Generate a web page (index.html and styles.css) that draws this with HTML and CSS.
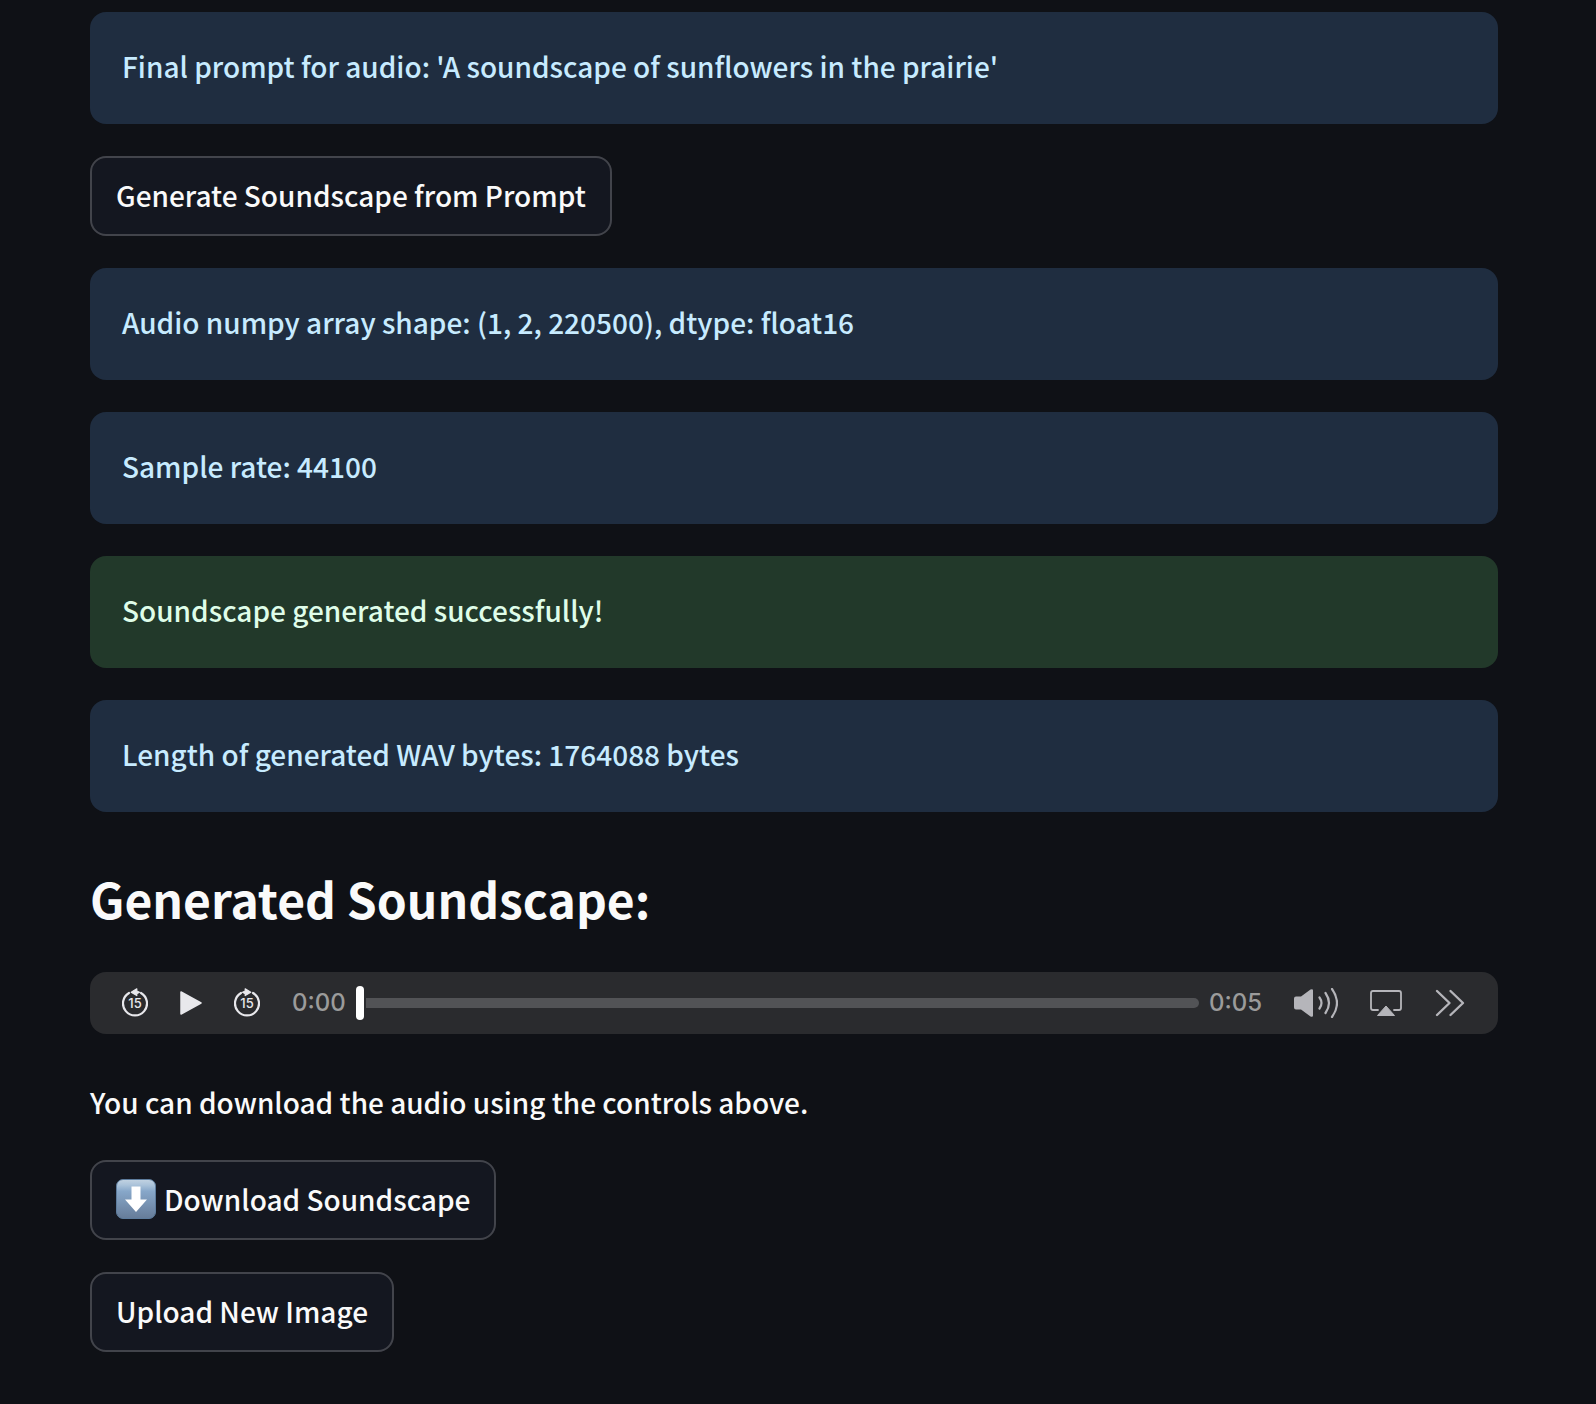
FILE: index.html
```html
<!DOCTYPE html>
<html lang="en">
<head>
<meta charset="utf-8">
<meta name="viewport" content="width=device-width, initial-scale=1">
<title>Soundscape Generator</title>
<link rel="stylesheet" href="styles.css">
</head>
<body>
<main class="page">
  <div class="alert alert-info">Final prompt for audio: 'A soundscape of sunflowers in the prairie'</div>
  <button class="button" type="button">Generate Soundscape from Prompt</button>
  <div class="alert alert-info">Audio numpy array shape: (1, 2, 220500), dtype: float16</div>
  <div class="alert alert-info">Sample rate: 44100</div>
  <div class="alert alert-success">Soundscape generated successfully!</div>
  <div class="alert alert-info">Length of generated WAV bytes: 1764088 bytes</div>
  <h2 class="heading">Generated Soundscape:</h2>
  <div class="player" role="group" aria-label="Audio player">
    <div class="transport">
      <button class="control" type="button" aria-label="Back 15 seconds">
        <svg width="26" height="30" viewBox="0 0 26 30">
          <path d="M7 5A12 12 0 1 0 19 5" fill="none" stroke="currentColor" stroke-width="2.200" stroke-linecap="round"/>
          <path d="M9.200 4.200L14.800 .8V3L17.500 4.200L14.800 5.600V7.600Z" fill="currentColor" stroke="currentColor" stroke-width="1.200" stroke-linejoin="round"/>
          <text class="skip" x="13" y="20" text-anchor="middle">15</text>
        </svg>
      </button>
      <button class="control" type="button" aria-label="Play">
        <svg width="22" height="26" viewBox="0 0 22 26"><path d="M1 2L21 13L1 24Z" fill="currentColor" stroke="currentColor" stroke-width="1.500" stroke-linejoin="round"/></svg>
      </button>
      <button class="control" type="button" aria-label="Forward 15 seconds">
        <svg width="26" height="30" viewBox="0 0 26 30">
          <path d="M7 5A12 12 0 1 0 19 5" fill="none" stroke="currentColor" stroke-width="2.200" stroke-linecap="round"/>
          <path d="M16.800 4.200L11.200 .8V3L8.500 4.200L11.200 5.600V7.600Z" fill="currentColor" stroke="currentColor" stroke-width="1.200" stroke-linejoin="round"/>
          <text class="skip" x="13" y="20" text-anchor="middle">15</text>
        </svg>
      </button>
    </div>
    <div class="timeline">
      <span class="time">0:00</span>
      <input class="seek" type="range" min="0" max="5" value="0" aria-label="Seek">
      <span class="time">0:05</span>
    </div>
    <div class="transport transport-dim">
      <button class="control" type="button" aria-label="Volume">
        <svg width="44" height="30" viewBox="0 0 44 30">
          <path d="M2 8.500H7L16.500 1.600Q19 .4 19 2.500V27.500Q19 29.600 16.500 28.400L7 21.500H2Q0 21.500 0 19.500V10.500Q0 8.500 2 8.500Z" fill="currentColor"/>
          <path d="M25.500 9.500Q29.500 15 25.500 20.500M31.500 5Q38.500 15 31.500 25M38 1Q48 15 38 29" fill="none" stroke="currentColor" stroke-width="2.200" stroke-linecap="round"/>
        </svg>
      </button>
      <button class="control" type="button" aria-label="AirPlay">
        <svg width="32" height="28" viewBox="0 0 32 28">
          <path d="M8 21H3Q1 21 1 19V4Q1 2 3 2H29Q31 2 31 4V19Q31 21 29 21H24" fill="none" stroke="currentColor" stroke-width="1.800" stroke-linecap="round"/>
          <path d="M16 17L24.500 26.500H7.500Z" fill="currentColor" stroke="currentColor" stroke-linejoin="round"/>
        </svg>
      </button>
      <button class="control" type="button" aria-label="More controls">
        <svg width="32" height="28" viewBox="0 0 32 28"><path d="M3 2L15.500 14L3 26M16.500 2L29 14L16.500 26" fill="none" stroke="currentColor" stroke-width="2.400" stroke-linecap="round" stroke-linejoin="round"/></svg>
      </button>
    </div>
  </div>
  <p class="note">You can download the audio using the controls above.</p>
  <button class="button" type="button">
    <svg class="button-icon" width="40" height="40" viewBox="0 0 40 40" aria-hidden="true">
      <defs>
        <linearGradient id="tile" x1="0" y1="0" x2="0" y2="1">
          <stop offset="0" stop-color="#c3d3e2"/>
          <stop offset=".14" stop-color="#abc3da"/>
          <stop offset=".3" stop-color="#87a7c9"/>
          <stop offset="1" stop-color="#667c99"/>
        </linearGradient>
      </defs>
      <rect x=".5" y=".5" width="39" height="39" rx="6.500" fill="url(#tile)" stroke="#5d7c9d"/>
      <path d="M15.500 7.500H24.500V20.500H31L20 33L9 20.500H15.500Z" fill="#fff"/>
    </svg>
    Download Soundscape
  </button>
  <button class="button" type="button">Upload New Image</button>
</main>
</body>
</html>
```
FILE: styles.css
```css
* {
  box-sizing: border-box;
}

body {
  margin: 0;
  background: #0f1116;
  color: #fafafa;
  font-family: "Noto Sans CJK SC", "Noto Sans", sans-serif;
  font-size: 28px;
  font-weight: 500;
  line-height: 48px;
}

.page {
  display: flex;
  flex-direction: column;
  align-items: flex-start;
  gap: 32px;
  padding: 12px 98px 52px 90px;
}

.alert {
  width: 100%;
  padding: 30px 32px 34px;
  border-radius: 16px;
}

.alert-info {
  background: #1f2d40;
  color: #c7ebff;
}

.alert-success {
  background: #22392a;
  color: #dffde9;
}

.button {
  display: flex;
  align-items: center;
  gap: 8px;
  min-height: 80px;
  padding: 0 24px 3px;
  border: 2px solid #42444b;
  border-radius: 16px;
  background: #141720;
  color: inherit;
  font: inherit;
}

.heading {
  margin: 0;
  padding: 20px 0 8px;
  font-size: 48px;
  font-weight: 700;
  line-height: 68px;
}

.player {
  display: flex;
  align-items: center;
  gap: 32px;
  width: 100%;
  height: 62px;
  padding: 0 32px;
  border-radius: 16px;
  background: #2a2b2e;
  color: #e8e8ec;
}

.transport {
  display: flex;
  align-items: center;
  gap: 32px;
}

.transport-dim {
  color: #b5b5ba;
}

.control {
  display: flex;
  padding: 0;
  border: 0;
  background: none;
  color: inherit;
}

.skip {
  fill: currentColor;
  font: 500 13px Inter, sans-serif;
}

.timeline {
  display: flex;
  flex: 1;
  align-items: center;
  gap: 10px;
  min-width: 0;
}

.time {
  color: #9b9b9b;
  font: 500 24px/32px Inter, sans-serif;
}

.seek {
  flex: 1;
  min-width: 0;
  height: 34px;
  margin: 0;
  appearance: none;
  background: none;
}

.seek::-webkit-slider-runnable-track {
  height: 10px;
  border-radius: 5px;
  background: #525356;
}

.seek::-webkit-slider-thumb {
  appearance: none;
  width: 8px;
  height: 34px;
  margin-top: -12px;
  border-radius: 4px;
  background: #fff;
  box-shadow: 0 0 0 2px #2a2b2e;
}

.note {
  margin: 0;
  padding: 12px 0 2px;
}
```
